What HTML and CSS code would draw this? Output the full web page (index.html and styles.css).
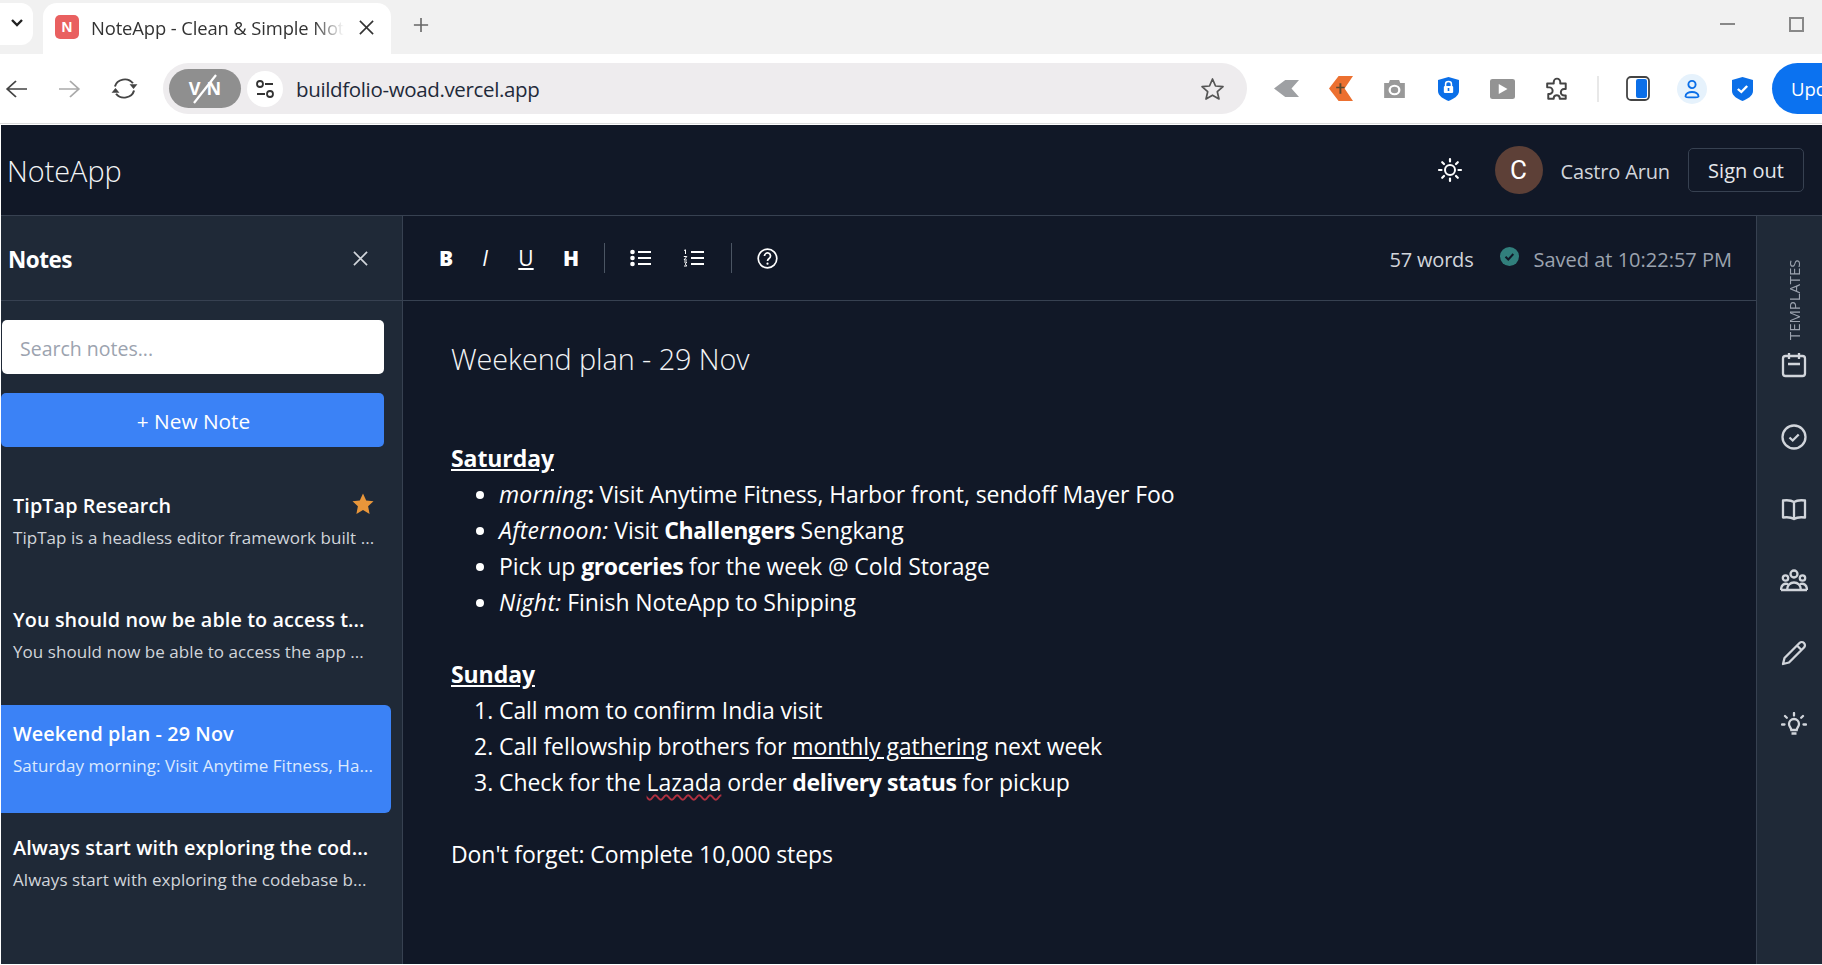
FILE: index.html
```html
<!DOCTYPE html>
<html lang="en">
<head>
<meta charset="utf-8">
<title>NoteApp - Clean &amp; Simple Notes</title>
<link rel="stylesheet" href="styles.css">
</head>
<body>
<div class="tabstrip">
  <div class="tabsearch"><svg width="14" height="10" viewBox="0 0 14 10"><path d="M2 2l5 5 5-5" fill="none" stroke="#222" stroke-width="2.4"/></svg></div>
  <div class="tab">
    <span class="favicon">N</span>
    <span class="tabtitle">NoteApp - Clean &amp; Simple Notes</span>
    <svg class="tabclose" width="17" height="17" viewBox="0 0 18 18"><path d="M2 2l14 14M16 2L2 16" stroke="#333" stroke-width="1.7" fill="none"/></svg>
  </div>
  <svg class="newtab" width="16" height="16" viewBox="0 0 18 18"><path d="M9 1v16M1 9h16" stroke="#666" stroke-width="1.8" fill="none"/></svg>
  <div class="winctl">
    <span class="winmin"></span>
    <span class="winmax"></span>
  </div>
</div>
<div class="toolbar">
  <svg class="nav-back" width="22" height="20" viewBox="0 0 20 20" preserveAspectRatio="none"><path d="M20 10H2M10 2l-8 8 8 8" fill="none" stroke="#444" stroke-width="1.7"/></svg>
  <svg class="nav-fwd" width="22" height="20" viewBox="0 0 20 20" preserveAspectRatio="none"><path d="M0 10h18M10 2l8 8-8 8" fill="none" stroke="#aaa" stroke-width="1.7"/></svg>
  <svg class="nav-reload" width="27" height="25" viewBox="0 0 24 24" preserveAspectRatio="none"><path d="M3.500 10a9 9 0 0 1 16-3M20.500 14a9 9 0 0 1-16 3" fill="none" stroke="#444" stroke-width="1.8"/><path d="M16.500 8h7l-3.500 4.500zM7.500 16h-7l3.500-4.500z" fill="#444"/></svg>
  <div class="omnibox">
    <div class="vpn">V<span class="vpn-gap"></span>N<svg class="vpn-slash" width="26" height="30" viewBox="0 0 26 30"><path d="M2 29L24 1" stroke="#fff" stroke-width="2.200"/></svg></div>
    <div class="tune"><svg width="22" height="22" viewBox="0 0 22 22"><circle cx="6" cy="6" r="3" fill="none" stroke="#333" stroke-width="1.8"/><path d="M11 6h8M3 16h8" stroke="#333" stroke-width="1.8"/><circle cx="16" cy="16" r="3" fill="none" stroke="#333" stroke-width="1.8"/></svg></div>
    <span class="url">buildfolio-woad.vercel.app</span>
    <svg class="star" width="25" height="24" viewBox="0 0 24 24"><path d="M12 2l3 7 7.500.7-5.700 5 1.700 7.300L12 18.200 5.500 22l1.700-7.300-5.700-5L9 9z" fill="none" stroke="#555" stroke-width="1.7" stroke-linejoin="round"/></svg>
  </div>
  <svg class="ext e1" width="25" height="17" viewBox="0 0 20 18" preserveAspectRatio="none"><path d="M20 0H9L0 9l9 9h11l-6-9z" fill="#9ea0a3"/></svg>
  <svg class="ext e2" width="24" height="25" viewBox="0 0 20 24" preserveAspectRatio="none"><path d="M8 0h12l-7 12 7 12H8L0 12z" fill="#ec7030"/><path d="M6 11h7M9.500 7v10" stroke="#5a4a30" stroke-width="1.600"/></svg>
  <svg class="ext e3" width="23" height="20" viewBox="0 0 20 20" preserveAspectRatio="none"><path d="M1 4h4l1-3h8l1 3h4v15H1z" fill="#999"/><circle cx="10" cy="11" r="4.200" fill="none" stroke="#fff" stroke-width="2"/></svg>
  <svg class="ext e4" width="21" height="24" viewBox="0 0 18 24" preserveAspectRatio="none"><path d="M9 0l9 3v11c0 5-5 8-9 10-4-2-9-5-9-10V3z" fill="#0b6fe8"/><rect x="5" y="9" width="8" height="7" rx="1" fill="#fff"/><path d="M6.500 9V7a2.500 2.500 0 0 1 5 0v2" fill="none" stroke="#fff" stroke-width="1.300"/><rect x="8.300" y="11" width="1.400" height="3" fill="#0b6fe8"/></svg>
  <svg class="ext e5" width="25" height="20" viewBox="0 0 20 20" preserveAspectRatio="none"><rect width="20" height="20" rx="2" fill="#939393"/><path d="M7 5l7 5-7 5z" fill="#fff"/></svg>
  <svg class="ext e6" width="24" height="24" viewBox="0 0 22 22" preserveAspectRatio="none"><path d="M8 4.500a3 3 0 0 1 6 0V6h5v5h-1.500a3 3 0 0 0 0 6H19v3h-5.500v-1a2.800 2.800 0 0 0-5.500 0v1H3v-4.500h1a3 3 0 0 0 0-6H2V6h6z" fill="none" stroke="#444" stroke-width="1.800" stroke-linejoin="round"/></svg>
  <span class="extsep"></span>
  <svg class="ext e7" width="24" height="25" viewBox="0 0 24 25" preserveAspectRatio="none"><rect x="1" y="1" width="22" height="23" rx="4" fill="#fff" stroke="#444" stroke-width="1.800"/><rect x="10" y="3" width="11" height="19" rx="2" fill="#0b6fe8"/></svg>
  <div class="profile"><svg width="16" height="20" viewBox="0 0 16 20"><circle cx="8" cy="5.500" r="3.600" fill="none" stroke="#0b6fe8" stroke-width="1.900"/><path d="M1.500 17.500c0-6 13-6 13 0 0 1.200-13 1.200-13 0z" fill="none" stroke="#0b6fe8" stroke-width="1.900"/></svg></div>
  <svg class="ext e8" width="21" height="24" viewBox="0 0 18 24" preserveAspectRatio="none"><path d="M9 0l9 3v11c0 5-5 8-9 10-4-2-9-5-9-10V3z" fill="#0b6fe8"/><path d="M5 12l3 3 5-6" fill="none" stroke="#fff" stroke-width="2"/></svg>
  <div class="update">Update</div>
</div>
<div class="app">
  <header class="appbar">
    <span class="brand">NoteApp</span>
    <div class="account">
      <svg class="sun" width="26" height="26" viewBox="0 0 26 26"><circle cx="13" cy="13" r="5" fill="none" stroke="#fff" stroke-width="2"/><path d="M13 2v2.500M13 21.500V24M2 13h2.500M21.500 13H24M5.200 5.200l1.800 1.800M19 19l1.800 1.800M5.200 20.800L7 19M19 7l1.800-1.800" stroke="#fff" stroke-width="2.200" stroke-linecap="round"/></svg>
      <span class="avatar">C</span>
      <span class="username">Castro Arun</span>
      <span class="signout">Sign out</span>
    </div>
  </header>
  <div class="workspace">
    <aside class="sidebar">
      <div class="side-head">
        <span class="side-title">Notes</span>
        <svg class="side-close" width="15" height="15" viewBox="0 0 16 16"><path d="M1 1l14 14M15 1L1 15" stroke="#d1d5db" stroke-width="1.800"/></svg>
      </div>
      <div class="side-actions">
        <div class="search">Search notes...</div>
        <div class="newnote">+ New Note</div>
      </div>
      <div class="notelist">
        <div class="note">
          <div class="note-row"><span class="note-title">TipTap Research</span><svg class="note-star" width="24" height="24" viewBox="0 0 24 24"><path d="M12 1.500l3.200 7 7.300.8-5.400 5 1.500 7.600L12 18.100l-6.600 3.800 1.500-7.600-5.400-5 7.300-.8z" fill="#e8963a"/></svg></div>
          <div class="note-text">TipTap is a headless editor framework built ...</div>
        </div>
        <div class="note">
          <div class="note-row"><span class="note-title">You should now be able to access t...</span></div>
          <div class="note-text">You should now be able to access the app ...</div>
        </div>
        <div class="note active">
          <div class="note-row"><span class="note-title">Weekend plan - 29 Nov</span></div>
          <div class="note-text">Saturday morning: Visit Anytime Fitness, Ha...</div>
        </div>
        <div class="note">
          <div class="note-row"><span class="note-title">Always start with exploring the cod...</span></div>
          <div class="note-text">Always start with exploring the codebase b...</div>
        </div>
      </div>
    </aside>
    <main class="editor">
      <div class="edit-bar">
        <div class="tools">
          <span class="tool t-b">B</span>
          <span class="tool t-i">I</span>
          <span class="tool t-u">U</span>
          <span class="tool t-h">H</span>
          <span class="tool-sep"></span>
          <svg class="ticon" width="21" height="18" viewBox="0 0 21 18"><circle cx="2.500" cy="3" r="2.300" fill="#fff"/><circle cx="2.500" cy="9" r="2.300" fill="#fff"/><circle cx="2.500" cy="15" r="2.300" fill="#fff"/><path d="M8 3h13M8 9h13M8 15h13" stroke="#fff" stroke-width="2"/></svg>
          <svg class="ticon" width="21" height="18" viewBox="0 0 21 18"><path d="M8 3h13M8 9h13M8 15h13" stroke="#fff" stroke-width="2"/><path d="M1 1.500L2.500 .8V5M.8 7.500h3L1 11h3M1 13h2.800l-1.500 2 1.500 2H1" fill="none" stroke="#fff" stroke-width="1"/></svg>
          <span class="tool-sep"></span>
          <svg class="ticon" width="21" height="21" viewBox="0 0 21 21"><circle cx="10.500" cy="10.500" r="9.300" fill="none" stroke="#fff" stroke-width="1.700"/><path d="M7.500 8a3 3 0 1 1 4.600 2.500c-1.100.8-1.600 1.200-1.600 2.500" fill="none" stroke="#fff" stroke-width="1.700"/><circle cx="10.500" cy="15.700" r="1.100" fill="#fff"/></svg>
        </div>
        <div class="status">
          <span class="words">57 words</span>
          <svg class="saved-icon" width="19" height="19" viewBox="0 0 19 19"><circle cx="9.500" cy="9.500" r="9.500" fill="#317f7c"/><path d="M5.500 9.800l2.800 2.700 5-5.500" fill="none" stroke="#111827" stroke-width="2"/></svg>
          <span class="saved">Saved at 10:22:57 PM</span>
        </div>
      </div>
      <article class="doc">
        <h1 class="doc-title">Weekend plan - 29 Nov</h1>
        <p class="doc-head"><strong><u>Saturday</u></strong></p>
        <ul class="doc-list">
          <li><em>morning</em><strong>:</strong> Visit Anytime Fitness, Harbor front, sendoff Mayer Foo</li>
          <li><em>Afternoon:</em> Visit <strong>Challengers</strong> Sengkang</li>
          <li>Pick up <strong>groceries</strong> for the week @ Cold Storage</li>
          <li><em>Night:</em> Finish NoteApp to Shipping</li>
        </ul>
        <p class="doc-head gap"><strong><u>Sunday</u></strong></p>
        <ol class="doc-list">
          <li>Call mom to confirm India visit</li>
          <li>Call fellowship brothers for <u>monthly gathering</u> next week</li>
          <li>Check for the <span class="spell">Lazada</span> order <strong>delivery status</strong> for pickup</li>
        </ol>
        <p class="doc-head gap">Don't forget: Complete 10,000 steps</p>
      </article>
    </main>
    <aside class="rail">
      <span class="rail-label">TEMPLATES</span>
      <svg class="rail-icon" width="26" height="26" viewBox="0 0 26 26"><rect x="2" y="4" width="22" height="20" rx="2.500" fill="none" stroke="#d1d5db" stroke-width="2.300"/><path d="M8 1v6M18 1v6M7 12h12" stroke="#d1d5db" stroke-width="2.300"/></svg>
      <svg class="rail-icon" width="26" height="26" viewBox="0 0 26 26"><circle cx="13" cy="13" r="11.500" fill="none" stroke="#d1d5db" stroke-width="2.300"/><path d="M8.500 13.500l3.200 3 6-6" fill="none" stroke="#d1d5db" stroke-width="2.300"/></svg>
      <svg class="rail-icon" width="26" height="26" viewBox="0 0 26 26"><path d="M13 6c-3-2-7-2-11-1.500v17c4-.5 8-.5 11 1.500 3-2 7-2 11-1.500v-17C20 4 16 4 13 6zM13 6v17" fill="none" stroke="#d1d5db" stroke-width="2.300" stroke-linejoin="round"/></svg>
      <svg class="rail-icon" width="28" height="26" viewBox="0 0 28 26"><circle cx="14" cy="6" r="3.500" fill="none" stroke="#d1d5db" stroke-width="2.300"/><circle cx="5.500" cy="10" r="2.700" fill="none" stroke="#d1d5db" stroke-width="2.300"/><circle cx="22.500" cy="10" r="2.700" fill="none" stroke="#d1d5db" stroke-width="2.300"/><path d="M7 22c0-10 14-10 14 0zM1 22c0-5 3-7 7-6M27 22c0-5-3-7-7-6M1 22h26" fill="none" stroke="#d1d5db" stroke-width="2.300" stroke-linejoin="round"/></svg>
      <svg class="rail-icon" width="26" height="26" viewBox="0 0 26 26"><path d="M2 24l1.500-6L18.500 3a3 3 0 0 1 4.500 4.500L8 22.500zM16 5.500L20.500 10" fill="none" stroke="#d1d5db" stroke-width="2.300" stroke-linejoin="round"/></svg>
      <svg class="rail-icon" width="26" height="26" viewBox="0 0 26 26"><path d="M8 12a5 5 0 1 1 10 0c0 2.500-2 3.500-2.300 6h-5.400C10 15.500 8 14.500 8 12zM10.500 21.500h5" fill="none" stroke="#d1d5db" stroke-width="2.300"/><path d="M13 1v2.500M4 4l1.800 1.800M22 4l-1.800 1.800M1 12.500h2.500M22.500 12.500H25" stroke="#d1d5db" stroke-width="2.300" stroke-linecap="round"/></svg>
    </aside>
  </div>
</div>
</body>
</html>
```
FILE: styles.css
```css
* { box-sizing: border-box; }
html, body { height: 100%; }
body {
  margin: 0;
  width: 1822px;
  height: 965px;
  overflow: hidden;
  background: #fff;
  font-family: "Open Sans", "Noto Sans", sans-serif;
  display: flex;
  flex-direction: column;
  padding-bottom: 1px;
}

/* Browser tab strip */
.tabstrip {
  height: 54px;
  flex: none;
  background: #f1f1f1;
  display: flex;
  align-items: flex-start;
  padding-top: 3px;
}
.tabsearch {
  width: 33px;
  height: 42px;
  background: #fff;
  border-radius: 0 12px 12px 0;
  display: flex;
  align-items: center;
  justify-content: center;
  margin-right: 10px;
  padding-bottom: 2px;
}
.tab {
  width: 348px;
  height: 51px;
  background: #fff;
  border-radius: 14px 14px 0 0;
  display: flex;
  align-items: center;
  padding: 0 0 3px 12px;
}
.favicon {
  width: 24px;
  height: 24px;
  background: #e96060;
  border-radius: 5px;
  color: #fff;
  font: 700 15px/24px "Liberation Sans", sans-serif;
  text-align: center;
  flex: none;
}
.tabtitle {
  margin-left: 12px;
  width: 253px;
  flex: none;
  white-space: nowrap;
  overflow: hidden;
  font-size: 18.4px;
  letter-spacing: -0.12px;
  color: #333;
  -webkit-mask-image: linear-gradient(to right, #000 88%, transparent 100%);
  mask-image: linear-gradient(to right, #000 88%, transparent 100%);
}
.tabclose { margin-left: 14px; flex: none; }
.newtab { margin: 14px 0 0 22px; flex: none; }
.winctl {
  margin-left: auto;
  display: flex;
  align-items: center;
  height: 42px;
  padding-right: 18px;
}
.winmin { width: 15px; height: 2px; background: #888; margin-right: 54px; }
.winmax { width: 15px; height: 15px; border: 2px solid #888; }

/* Browser toolbar */
.toolbar {
  height: 70px;
  flex: none;
  background: #fff;
  display: flex;
  align-items: center;
  padding-left: 5px;
  border-bottom: 1px solid #dcdcdc;
}
.nav-fwd { margin-left: 32px; flex: none; }
.nav-reload { margin-left: 30px; flex: none; }
.nav-back { flex: none; }
.omnibox {
  margin-left: 25px;
  width: 1084px;
  flex: none;
  height: 51px;
  border-radius: 26px;
  background: #eeecee;
  display: flex;
  align-items: center;
  padding: 0 22px 0 6px;
}
.vpn {
  position: relative;
  width: 72px;
  height: 39px;
  border-radius: 20px;
  background: #8f8f8f;
  color: #fff;
  font: 700 18px/39px "Open Sans", sans-serif;
  text-align: center;
  flex: none;
}
.vpn-gap { display: inline-block; width: 6px; }
.vpn-slash { position: absolute; left: 23px; top: 5px; }
.tune {
  width: 36px;
  height: 36px;
  border-radius: 50%;
  background: #fff;
  margin-left: 6px;
  display: flex;
  align-items: center;
  justify-content: center;
  flex: none;
}
.url {
  margin-left: 13px;
  font-size: 20.5px;
  letter-spacing: -0.35px;
  color: #1f2a3a;
}
.star { margin-left: auto; flex: none; }
.ext { flex: none; }
.e1 { margin-left: 27px; }
.e2 { margin-left: 30px; }
.e3 { margin-left: 30px; }
.e4 { margin-left: 32px; }
.e5 { margin-left: 31px; }
.e6 { margin-left: 30px; }
.extsep { width: 2px; height: 26px; background: #e8e8e8; margin-left: 28px; flex: none; }
.e7 { margin-left: 27px; }
.profile {
  width: 30px;
  height: 30px;
  background: #e6f2fc;
  border-radius: 50%;
  display: flex;
  align-items: center;
  justify-content: center;
  margin-left: 27px;
  flex: none;
}
.e8 { margin-left: 25px; }
.update {
  margin-left: 19px;
  flex: 1;
  min-width: 0;
  height: 51px;
  background: #0b72f0;
  border-radius: 26px 0 0 26px;
  color: #fff;
  font-size: 18.5px;
  line-height: 51px;
  padding-left: 19px;
  overflow: hidden;
  white-space: nowrap;
}

/* App */
.app {
  flex: 1;
  min-height: 0;
  margin-left: 1px;
  margin-top: 1px;
  background: #111827;
  display: flex;
  flex-direction: column;
}
.appbar {
  height: 91px;
  flex: none;
  border-bottom: 1px solid #374151;
  display: flex;
  align-items: center;
  justify-content: space-between;
  padding: 0 18px 0 6px;
}
.brand { font-size: 28.8px; font-weight: 300; color: #f3f4f6; }
.account { display: flex; align-items: center; }
.sun { margin-right: 32px; }
.avatar {
  width: 48px;
  height: 48px;
  border-radius: 50%;
  background: #5d4037;
  color: #fff;
  font: 400 26px/48px "Roboto", sans-serif;
  text-align: center;
}
.username { margin-left: 18px; padding-top: 2px; font-size: 20px; color: #d1d5db; letter-spacing: -0.15px; }
.signout {
  margin-left: 18px;
  width: 116px;
  height: 44px;
  border: 1px solid #374151;
  border-radius: 5px;
  color: #e5e7eb;
  font-size: 20px;
  line-height: 44px;
  text-align: center;
}
.workspace { flex: 1; min-height: 0; display: flex; }

/* Sidebar */
.sidebar {
  width: 402px;
  flex: none;
  background: #1f2937;
  border-right: 1px solid #374151;
  display: flex;
  flex-direction: column;
}
.side-head {
  height: 85px;
  flex: none;
  display: flex;
  align-items: center;
  justify-content: space-between;
  border-bottom: 1px solid #374151;
  padding: 0 34px 0 7px;
}
.side-title { padding-top: 2px; font-size: 22.5px; font-weight: 700; color: #fff; letter-spacing: -0.5px; }
.side-actions {
  display: flex;
  flex-direction: column;
  gap: 19px;
  padding: 19px 18px 0 0;
}
.search {
  height: 54px;
  margin-left: 1px;
  background: #fff;
  border-radius: 5px;
  padding-left: 18px;
  font-size: 19.5px;
  line-height: 57px;
  color: #9ca3af;
}
.newnote {
  height: 54px;
  background: #3b82f6;
  border-radius: 5px;
  color: #fff;
  text-align: center;
  font-size: 20.8px;
  line-height: 56px;
  padding-left: 2px;
}
.notelist {
  display: flex;
  flex-direction: column;
  gap: 6px;
  padding-top: 30px;
}
.note {
  width: 390px;
  height: 108px;
  padding: 13px 16px 0 12px;
  border-radius: 0 6px 6px 0;
  color: #fff;
}
.note.active { background: #3b82f6; }
.note-row { display: flex; align-items: center; justify-content: space-between; height: 30px; }
.note-title {
  font-size: 19.8px;
  font-weight: 600;
  letter-spacing: 0.1px;
  white-space: nowrap;
}
.note-star { flex: none; margin-top: -2px; }
.note-text {
  margin-top: 3px;
  font-size: 17px;
  line-height: 30px;
  letter-spacing: 0.05px;
  color: #d1d5db;
  white-space: nowrap;
}
.active .note-text { color: #dbeafe; }

/* Editor */
.editor { flex: 1; min-width: 0; display: flex; flex-direction: column; }
.edit-bar {
  height: 85px;
  flex: none;
  border-bottom: 1px solid #374151;
  display: flex;
  align-items: center;
  justify-content: space-between;
  padding: 0 24px 0 34px;
}
.tools { display: flex; align-items: center; }
.tool { text-align: center; color: #fff; font-size: 21px; line-height: 30px; }
.t-b { font-weight: 800; width: 18px; }
.t-i { font-style: italic; margin-left: 21px; width: 18px; }
.t-u { text-decoration: underline; margin-left: 22px; width: 20px; }
.t-h { font-weight: 800; margin-left: 25px; width: 20px; }
.tool-sep { width: 1px; height: 30px; background: #4b5563; margin-left: 23px; }
.ticon { flex: none; margin-left: 25px; }
.ticon + .ticon { margin-left: 32px; }
.ticon + .tool-sep { margin-left: 27px; }
.status { display: flex; align-items: center; }
.words { padding-top: 2px; font-size: 20px; color: #d1d5db; letter-spacing: -0.2px; }
.saved-icon { margin-left: 27px; margin-top: -3px; }
.saved { padding-top: 2px; margin-left: 14px; font-size: 20px; color: #9ca3af; }

.doc { padding: 34px 48px 0 48px; color: #fff; font-size: 23px; line-height: 36px; letter-spacing: -0.08px; }
.doc-title { margin: 0 0 57px; font-size: 28.8px; font-weight: 300; line-height: 48px; color: #f3f4f6; }
.doc-head { margin: 0; }
.doc-head.gap { margin-top: 36px; }
.doc-list { margin: 0; padding-left: 48px; }
.doc-list strong { letter-spacing: -0.4px; }
.doc-list em { letter-spacing: 0.3px; }
.spell { text-decoration: underline wavy #b03040 1.5px; text-underline-offset: 3px; }

/* Right rail */
.rail {
  width: 66px;
  flex: none;
  background: #1f2937;
  border-left: 1px solid #374151;
  display: flex;
  flex-direction: column;
  align-items: center;
  padding: 42px 0 0 8px;
}
.rail-label {
  writing-mode: vertical-rl;
  transform: rotate(180deg);
  font-size: 15px;
  color: #9ca3af;
  letter-spacing: -0.1px;
  height: 82px;
  line-height: 20px;
}
.rail-icon { flex: none; margin-bottom: 46px; }
.rail-label + .rail-icon { margin-top: 12px; }
```
